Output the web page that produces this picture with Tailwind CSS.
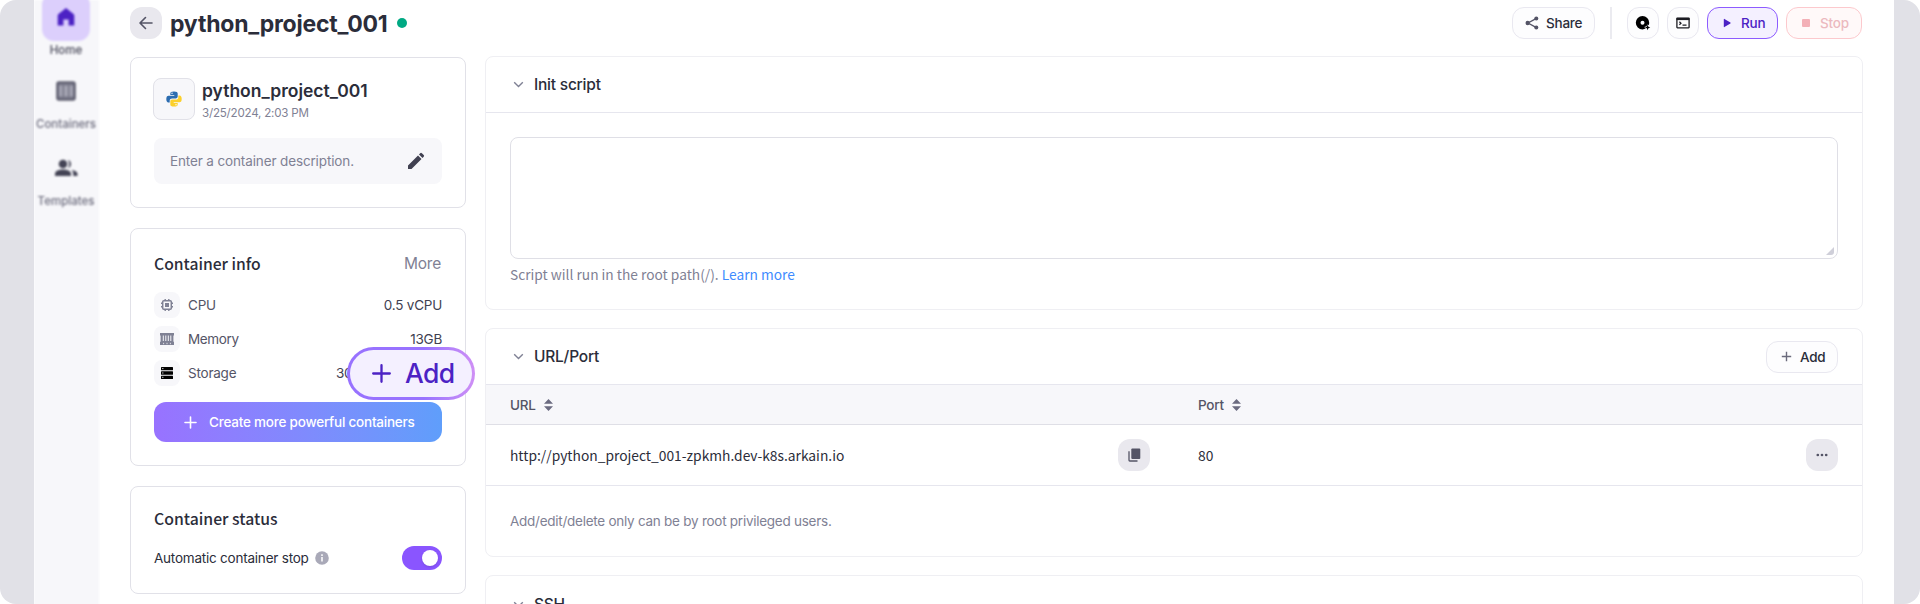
<!DOCTYPE html>
<html lang="en">
<head>
<meta charset="utf-8">
<title>python_project_001</title>
<script src="https://cdn.jsdelivr.net/npm/@tailwindcss/browser@4"></script>
</head>
<body class="bg-white font-['Inter','Noto_Sans_CJK_KR',sans-serif] text-[13.5px] tracking-[-0.22px] text-[#2b2d3a] overflow-hidden">
<div class="flex h-[604px] w-[1920px] overflow-hidden rounded-[16px] bg-[#e1e1e7] pl-[34px] pr-[26px]">

  <!-- Sidebar -->
  <nav class="h-full w-[67px] shrink-0 overflow-hidden bg-white">
    <div class="flex h-[612px] w-[65px] flex-col items-center bg-[#f7f7fa] pr-[1px] text-[11.5px] font-medium tracking-normal text-[#555568] blur-[1.3px]">
      <div class="-mt-[7px] flex h-12 w-12 shrink-0 items-center justify-center rounded-xl bg-[#dccffc]">
        <svg width="18" height="20" viewBox="0 0 18 20"><path d="M9 1 L16.5 7 Q17.3 7.7 17.3 8.7 V18.6 H11.6 V12.5 H6.4 V18.6 H.7 V8.7 Q.7 7.7 1.5 7Z" fill="#4c22c4"/></svg>
      </div>
      <span class="mt-[1px] h-4 shrink-0 leading-4 text-[#444455]">Home</span>
      <svg class="mt-[23px] shrink-0" width="20" height="20" viewBox="0 0 20 20"><rect x="1.5" y="1.5" width="17" height="17" rx="1.5" fill="#a4a4b2" stroke="#5f5f70" stroke-width="2.6"/><path d="M7.3 3v14M12.7 3v14M3 3.6h14M3 16.4h14" stroke="#777788" stroke-width="1.6"/></svg>
      <span class="mt-[15px] h-4 shrink-0 leading-4 text-[#6b6b7c]">Containers</span>
      <svg class="mt-[26px] shrink-0" width="24" height="20" viewBox="0 0 24 20"><circle cx="9" cy="6" r="4.3" fill="#444455"/><path d="M1 18v-2.3C1 12.800 5.500 11.500 9 11.500s8 1.300 8 4.200V18Z" fill="#444455"/><path d="M14 1.900a4.300 4.300 0 0 1 0 8.200c1.600-2.400 1.600-5.800 0-8.200ZM17.500 12c3 .5 6 1.700 6 3.900V18h-4.300v-2.300c0-1.500-.6-2.700-1.700-3.700Z" fill="#444455"/></svg>
      <span class="mt-[15px] h-4 shrink-0 leading-4 text-[#6b6b7c]">Templates</span>
    </div>
  </nav>

  <main class="h-full flex-1 bg-white pl-[29px] pr-[31px] pt-[7px]">
    <!-- Title bar -->
    <header class="flex h-8 items-center">
      <button class="flex h-8 w-8 items-center justify-center rounded-xl bg-[#e9e8ee]">
        <svg width="16" height="16" viewBox="0 0 16 16" fill="none" stroke="#545466" stroke-width="1.6" stroke-linecap="round" stroke-linejoin="round"><path d="M14 8H2.200M7.500 2.500 2 8l5.500 5.500"/></svg>
      </button>
      <h1 class="ml-2 whitespace-nowrap pt-[2px] text-[23px] font-bold leading-8">python_project_001</h1>
      <span class="ml-[10px] h-[10px] w-[10px] rounded-full bg-[#00a983]"></span>
      <div class="ml-auto flex items-center font-medium">
        <button class="flex h-8 w-[83px] items-center rounded-xl border border-[#e9e8f0] bg-[#fdfdfe] pl-3">
          <svg width="14" height="14" viewBox="0 0 14 14"><path d="M11 2.600 3 7l8 4.400" fill="none" stroke="#545466" stroke-width="1.300"/><circle cx="11.300" cy="2.600" r="2" fill="#545466"/><circle cx="2.700" cy="7" r="2.200" fill="#545466"/><circle cx="11.300" cy="11.400" r="2" fill="#545466"/></svg>
          <span class="ml-[7px]">Share</span>
        </button>
        <span class="ml-[15px] h-8 w-[2px] bg-[#ebebf0]"></span>
        <button class="ml-[15px] flex h-8 w-8 items-center justify-center rounded-xl border border-[#e9e8f0] bg-[#fdfdfe]">
          <svg width="16" height="16" viewBox="0 0 16 16"><path fill-rule="evenodd" d="M7.500 1a6.700 6.700 0 0 1 6.700 6.700c0 1-.2 1.700-.6 2.600l-1-.9-1.200 1.800-2.200.9 1.600 1.500c-1 .5-2.200.8-3.300.8A6.700 6.700 0 1 1 7.500 1Zm0 4.700a2 2 0 1 0 0 4 2 2 0 0 0 0-4Z"/><path d="M12.600 9.800l.8 1.900 1.900.8-1.900.8-.8 1.900-.8-1.900-1.900-.8 1.900-.8Z"/></svg>
        </button>
        <button class="ml-2 flex h-8 w-8 items-center justify-center rounded-xl border border-[#e9e8f0] bg-[#fdfdfe]">
          <svg width="14" height="12" viewBox="0 0 14 12" fill="none" stroke="#1c1c22"><rect x=".9" y="1.200" width="12.200" height="9.600" rx=".5" stroke-width="1.300"/><path d="M.5 2h13" stroke-width="2.200"/><path d="M3.400 4.800 5 6.300 3.400 7.800M6.500 8.200h4" stroke-width="1.200"/></svg>
        </button>
        <button class="ml-2 flex h-8 w-[71px] items-center rounded-xl border border-[#8d5bff] bg-[#f4f0ff] pl-[15px] text-[#4c22c4]">
          <svg width="9" height="10" viewBox="0 0 9 10"><path d="M.8 1.300v7.400q0 .7.600.4l6-3.700q.5-.4 0-.8l-6-3.700q-.6-.3-.6.4Z" fill="#4c22c4"/></svg>
          <span class="ml-[9px]">Run</span>
        </button>
        <button class="ml-2 mr-[1px] flex h-8 w-[76px] items-center rounded-xl border border-[#fcc9cd] bg-[#fff9f9] pl-[15px] text-[#ecb9bf]">
          <span class="h-2 w-2 rounded-[1px] bg-[#f3b0b7]"></span>
          <span class="ml-[10px]">Stop</span>
        </button>
      </div>
    </header>

    <div class="mt-[17px] flex items-start">
      <!-- Left column -->
      <aside class="mt-[1px] flex w-[336px] shrink-0 flex-col">
        <section class="h-[151px] rounded-lg border border-[#e1e1e8] px-[22px] pt-5">
          <div class="flex h-[42px]">
            <div class="flex h-[42px] w-[42px] items-center justify-center rounded-lg border border-[#e1e1e8] bg-[#f7f7fa]">
              <svg width="16" height="16" viewBox="0 0 16 16"><path d="M8 .4C5.200.4 4.300 1.300 4.300 2.600v1.500h4v.6H2.500C1.100 4.700.3 5.900.3 8s.8 3.400 2.100 3.400h1.300V9.600c0-1.300 1.100-2.200 2.300-2.200h3.800c1 0 1.900-.8 1.900-1.800v-3C11.700 1.300 10.600.4 8 .4Z" fill="#2b6cb0"/><circle cx="6" cy="2.300" r=".7" fill="#fff"/><path d="M8 15.600c2.800 0 3.700-.9 3.700-2.200v-1.500h-4v-.6h5.800c1.400 0 2.200-1.200 2.200-3.300s-.8-3.400-2.100-3.400h-1.300v1.800c0 1.300-1.100 2.200-2.300 2.200H6.200c-1 0-1.900.8-1.900 1.800v3c0 1.300 1.100 2.200 3.700 2.200Z" fill="#fbd02c"/><circle cx="10" cy="13.700" r=".7" fill="#fff"/></svg>
            </div>
            <div class="ml-[7px] flex flex-col">
              <h2 class="mt-[1px] text-[17.5px] font-semibold leading-6 tracking-normal">python_project_001</h2>
              <time class="mt-[2px] text-[11.6px] leading-4 text-[#7f8194]">3/25/2024, 2:03 PM</time>
            </div>
          </div>
          <div class="ml-[1px] mt-[18px] flex h-[46px] w-[288px] items-center rounded-lg bg-[#f7f7fa] pl-4 pr-[17px]">
            <span class="tracking-[-0.13px] text-[#7f8194]">Enter a container description.</span>
            <svg class="ml-auto" width="18" height="18" viewBox="0 0 18 18"><path d="M1 17v-3.500L11 3.500l3.500 3.500L4.500 17ZM12 2.500l1.200-1.200a1.200 1.200 0 0 1 1.700 0l1.800 1.800a1.200 1.200 0 0 1 0 1.700L15.500 6Z" fill="#414151"/></svg>
          </div>
        </section>

        <section class="relative mt-5 h-[238px] rounded-lg border border-[#e1e1e8] px-[23px] pt-[23px]">
          <div class="flex h-6 items-center justify-between">
            <h3 class="font-['Noto_Sans_CJK_KR',sans-serif] text-[15.700px] font-medium leading-6 tracking-normal">Container info</h3>
            <a class="pr-[1px] text-[15.5px] text-[#7f8194]">More</a>
          </div>
          <div class="mt-4 flex flex-col gap-2 text-[#545466]">
            <div class="flex h-[26px] items-center">
              <span class="flex h-[26px] w-[26px] items-center justify-center rounded-lg bg-[#f7f7fa]">
                <svg width="14" height="14" viewBox="0 0 14 14"><rect x="2.700" y="2.700" width="8.600" height="8.600" rx="1" fill="none" stroke="#7f8194" stroke-width="1.500"/><rect x="5" y="5" width="4" height="4" fill="#7f8194"/><path d="M5.200 1v1.500M8.800 1v1.500M5.200 11.500V13M8.800 11.500V13M1 5.200h1.500M1 8.800h1.500M11.500 5.200H13M11.500 8.800H13" stroke="#7f8194" stroke-width="1.400"/></svg>
              </span>
              <span class="ml-2 pt-[1px]">CPU</span><span class="ml-auto pt-[1px] text-[#414151]">0.5 vCPU</span>
            </div>
            <div class="flex h-[26px] items-center">
              <span class="flex h-[26px] w-[26px] items-center justify-center rounded-lg bg-[#f7f7fa]">
                <svg width="14" height="12" viewBox="0 0 14 12"><path d="M0 0h14v2.500h-.6v6.300h.6V12H0V8.800h.6V2.500H0Z" fill="#7f8194"/><path d="M3.300 2.500v5.500M5.800 2.500v5.500M8.300 2.500v5.500M10.800 2.500v5.500" stroke="#f7f7fa" stroke-width="1"/><path d="M3.600 9.800v1.400M7 9.800v1.400M10.400 9.800v1.400" stroke="#f7f7fa" stroke-width=".8"/></svg>
              </span>
              <span class="ml-2 pt-[1px] tracking-[-0.36px]">Memory</span><span class="ml-auto pt-[1px] text-[#414151]">13GB</span>
            </div>
            <div class="flex h-[26px] items-center">
              <span class="flex h-[26px] w-[26px] items-center justify-center rounded-lg bg-[#f7f7fa]">
                <svg width="12" height="12" viewBox="0 0 12 12"><rect y="0" width="12" height="3.300" rx=".5"/><rect y="4.350" width="12" height="3.300" rx=".5"/><rect y="8.700" width="12" height="3.300" rx=".5"/><path d="M1.200 1.600h1.200M1.200 6h1.200M1.200 10.300h1.200" stroke="#fff" stroke-width=".9"/></svg>
              </span>
              <span class="ml-2 pt-[1px]">Storage</span><span class="ml-auto w-[106px] pt-[1px] text-[#414151]">30GB</span>
            </div>
          </div>
          <button class="mt-4 flex h-10 w-[288px] items-center rounded-xl bg-linear-to-r from-[#9872ff] to-[#5f9efb] pl-[30px] font-medium text-white">
            <svg width="13" height="13" viewBox="0 0 13 13" stroke="#fff" stroke-width="1.600" stroke-linecap="round"><path d="M6.500 1v11M1 6.500h11"/></svg>
            <span class="ml-3 whitespace-nowrap">Create more powerful containers</span>
          </button>

          <!-- Enlarged action callout -->
          <div class="absolute left-[216px] top-[118px] h-[53px] w-[128px] rounded-full bg-linear-to-r from-[#9872ff] from-60% to-[#cf8ff5] p-[3px]">
            <div class="flex h-full w-full items-center rounded-full bg-[#f4f0ff] pl-[22px] text-[#4c22c4]">
              <svg width="19" height="19" viewBox="0 0 19 19" stroke="#4c22c4" stroke-width="2.300" stroke-linecap="round"><path d="M9.500 1.200v16.600M1.200 9.500h16.600"/></svg>
              <span class="ml-[14px] text-[26.500px] font-medium leading-8 tracking-[-0.6px] -mt-[1px]">Add</span>
            </div>
          </div>
        </section>

        <section class="mt-5 h-[108px] rounded-lg border border-[#e1e1e8] px-[23px] pt-5">
          <h3 class="font-['Noto_Sans_CJK_KR',sans-serif] text-[15.800px] font-medium leading-6 tracking-normal">Container status</h3>
          <div class="mt-[15px] flex h-6 items-center">
            <span class="w-[155px] whitespace-nowrap">Automatic container stop</span>
            <svg class="ml-[6px]" width="14" height="14" viewBox="0 0 14 14"><circle cx="7" cy="7" r="6.800" fill="#a9a9b8"/><path d="M7 6v4.500M7 3.200v1.700" stroke="#fff" stroke-width="1.500"/></svg>
            <span class="ml-auto flex h-6 w-10 items-center justify-end rounded-full bg-[#8a55ff] pr-1"><span class="h-4 w-4 rounded-full bg-white shadow-sm"></span></span>
          </div>
        </section>
      </aside>

      <!-- Right column -->
      <div class="ml-[19px] flex flex-1 flex-col">
        <section class="h-[254px] rounded-lg border border-[#efeff3]">
          <div class="flex h-14 items-center border-b border-[#e6e6ee] pl-[27px]">
            <svg width="11" height="7" viewBox="0 0 11 7" fill="none" stroke="#7f8194" stroke-width="1.400"><path d="M1.200 1.200 5.500 5.500 9.800 1.200"/></svg>
            <h3 class="ml-[10px] pt-[1px] text-[15.5px] font-medium">Init script</h3>
          </div>
          <div class="px-6 pt-6">
            <div class="flex h-[122px] items-end justify-end rounded-lg border border-[#dfdfe6] pb-[3px] pr-[3px]">
              <svg width="8" height="8" viewBox="0 0 8 8"><path d="M8 0v5q0 3-3 3H0Z" fill="#cfcfd9"/></svg>
            </div>
            <p class="mt-[3px] font-['Noto_Sans_CJK_KR',sans-serif] text-[13.740px] leading-6 tracking-normal text-[#7f8194]">Script will run in the root path(/). <a class="text-[#3e8bff]">Learn more</a></p>
          </div>
        </section>

        <section class="mt-[18px] h-[229px] rounded-lg border border-[#efeff3]">
          <div class="flex h-14 items-center border-b border-[#e6e6ee] pl-[27px] pr-6">
            <svg width="11" height="7" viewBox="0 0 11 7" fill="none" stroke="#7f8194" stroke-width="1.400"><path d="M1.200 1.200 5.500 5.500 9.800 1.200"/></svg>
            <h3 class="ml-[10px] pt-[1px] text-[15.5px] font-medium">URL/Port</h3>
            <button class="ml-auto flex h-8 w-[72px] items-center rounded-xl border border-[#e9e8f0] bg-[#fdfdfe] pl-[14px] font-medium">
              <svg width="11" height="11" viewBox="0 0 11 11" stroke="#6b6b7c" stroke-width="1.400"><path d="M5.500 .8v9.400M.8 5.500h9.400"/></svg>
              <span class="ml-[8px] pt-[1px]">Add</span>
            </button>
          </div>
          <div class="flex h-10 items-center border-b border-[#dfdfe6] bg-[#f7f7fa] px-6 font-medium text-[#545466]">
            <div class="flex w-[688px] items-center"><span class="pt-[1px]">URL</span>
              <svg class="ml-2" width="9" height="12" viewBox="0 0 9 12" fill="#6b6b80"><path d="M4.500 0 9 4.700H0ZM4.500 12 9 7.300H0Z"/></svg>
            </div>
            <div class="flex items-center"><span class="pt-[1px]">Port</span>
              <svg class="ml-2" width="9" height="12" viewBox="0 0 9 12" fill="#6b6b80"><path d="M4.500 0 9 4.700H0ZM4.500 12 9 7.300H0Z"/></svg>
            </div>
          </div>
          <div class="flex h-[61px] items-center border-b border-[#e6e6ee] px-6 font-['Noto_Sans_CJK_KR',sans-serif] text-[13.800px] tracking-normal">
            <div class="flex w-[640px] items-center justify-between">
              <span>http://python_project_001-zpkmh.dev-k8s.arkain.io</span>
              <button class="flex h-8 w-8 items-center justify-center rounded-xl bg-[#e9e8ee]">
                <svg width="13" height="14" viewBox="0 0 13 14"><rect x="3.300" y=".5" width="9" height="10.500" rx="1" fill="#545466"/><path d="M1 3.200V12.200q0 .8.800.8H9.500" fill="none" stroke="#545466" stroke-width="1.300"/></svg>
              </button>
            </div>
            <span class="ml-12">80</span>
            <button class="ml-auto flex h-8 w-8 items-center justify-center rounded-xl bg-[#e9e8ee]">
              <svg width="12" height="4" viewBox="0 0 12 4" fill="#545466"><circle cx="1.800" cy="2" r="1.350"/><circle cx="6" cy="2" r="1.350"/><circle cx="10.200" cy="2" r="1.350"/></svg>
            </button>
          </div>
          <p class="px-6 pt-[25px] leading-5 tracking-[-0.26px] text-[#7f8194]">Add/edit/delete only can be by root privileged users.</p>
        </section>

        <section class="mt-[18px] h-24 rounded-lg border border-[#efeff3]">
          <div class="flex h-14 items-center pl-[27px]">
            <svg width="11" height="7" viewBox="0 0 11 7" fill="none" stroke="#7f8194" stroke-width="1.400"><path d="M1.200 1.200 5.500 5.500 9.800 1.200"/></svg>
            <h3 class="ml-[10px] pt-[1px] text-[15.5px] font-medium">SSH</h3>
          </div>
        </section>
      </div>
    </div>
  </main>
</div>
</body>
</html>
